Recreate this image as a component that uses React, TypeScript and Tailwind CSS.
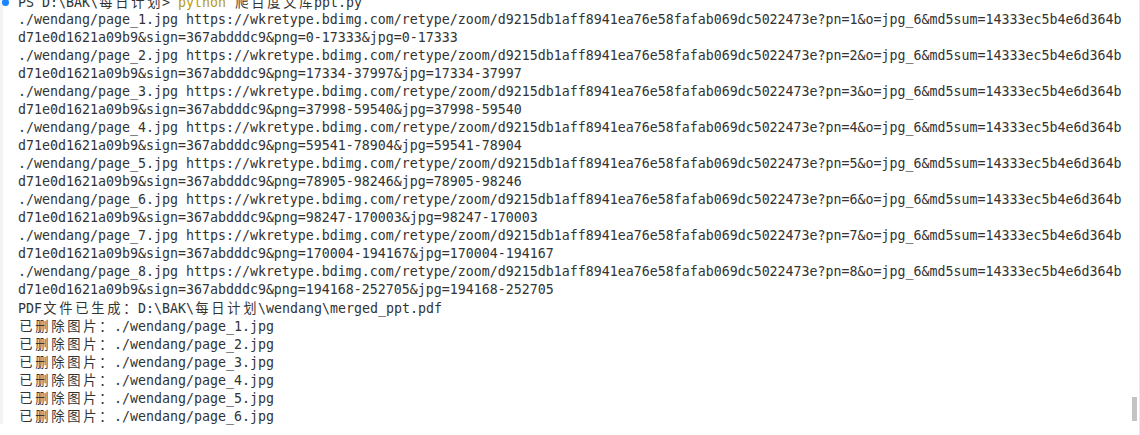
const hash = "d9215db1aff8941ea76e58fafab069dc5022473e";
const ranges = [
  ["0-17333", "0-17333"],
  ["17334-37997", "17334-37997"],
  ["37998-59540", "37998-59540"],
  ["59541-78904", "59541-78904"],
  ["78905-98246", "78905-98246"],
  ["98247-170003", "98247-170003"],
  ["170004-194167", "170004-194167"],
  ["194168-252705", "194168-252705"],
];

// wide chars take two cells, as the terminal draws them
function Cells({ text }: { text: string }) {
  const parts = text.split(/([\u2e80-\uffef])/);
  return (
    <>
      {parts.map((p, i) =>
        /^[\u2e80-\uffef]$/.test(p) ? (
          <span
            key={i}
            className="inline-block w-[16px] text-center font-['Noto_Sans_CJK_SC',sans-serif]"
          >
            {p}
          </span>
        ) : (
          <span key={i}>{p}</span>
        )
      )}
    </>
  );
}

function Line({ children, dot }: { children: React.ReactNode; dot?: boolean }) {
  return (
    <div className="flex h-[18px] items-center">
      <div className="flex w-[15px] shrink-0 items-center">
        {dot && <span className="ml-[-1px] h-[7px] w-[7px] rounded-full bg-[#1a85ff]" />}
      </div>
      <div className="whitespace-pre">{children}</div>
    </div>
  );
}

export default function App() {
  return (
    <div className="relative flex h-[435px] w-[1140px] overflow-hidden border-r border-[#e8e8e8] bg-white text-[13.29px] text-[#333333] font-['DejaVu_Sans_Mono','Liberation_Mono',monospace]">
      <div className="h-[424px] w-[3px] shrink-0 bg-[#f3f3f3]" />
      <div className="-mt-[7px] flex-1">
        <Line dot>
          <Cells text="PS D:\BAK\每日计划> " />
          <span className="text-[#b59b0a]">python</span>
          <span> </span>
          <Cells text="爬百度文库ppt.py" />
        </Line>
        {ranges.map(([png, jpg], i) => (
          <div key={i}>
            <Line>
              {`./wendang/page_${i + 1}.jpg https://wkretype.bdimg.com/retype/zoom/${hash}?pn=${i + 1}&o=jpg_6&md5sum=14333ec5b4e6d364b`}
            </Line>
            <Line>{`d71e0d1621a09b9&sign=367abdddc9&png=${png}&jpg=${jpg}`}</Line>
          </div>
        ))}
        <Line>
          <Cells text="PDF文件已生成：D:\BAK\每日计划\wendang\merged_ppt.pdf" />
        </Line>
        {[1, 2, 3, 4, 5, 6].map((n) => (
          <Line key={n}>
            <Cells text={`已删除图片：./wendang/page_${n}.jpg`} />
          </Line>
        ))}
      </div>
      {/* scrollbar thumb */}
      <div className="absolute right-[2px] top-[397px] h-[24px] w-[5px] bg-[#c4c4c4]" />
    </div>
  );
}
